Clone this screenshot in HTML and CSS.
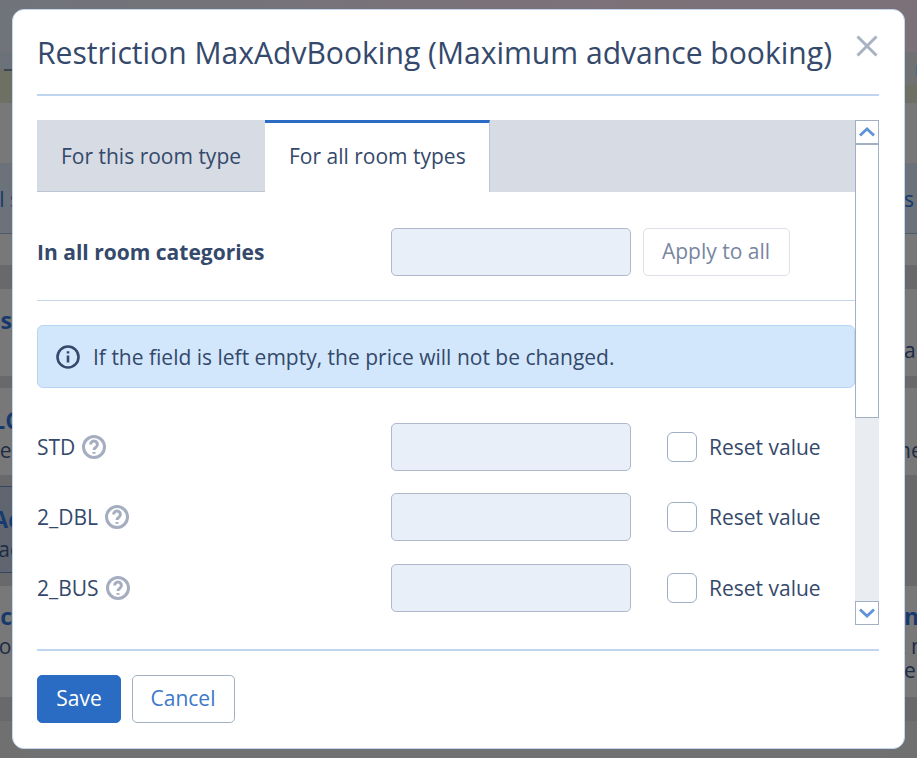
FILE: index.html
```html
<!DOCTYPE html>
<html lang="en">
<head>
<meta charset="utf-8">
<title>Restriction MaxAdvBooking</title>
<link rel="stylesheet" href="styles.css">
</head>
<body>
<div class="behind">
  <div class="strip left">
    <div class="seg h52"></div>
    <div class="seg h17 blue"></div>
    <div class="seg h34 green"><i class="specks"></i></div>
    <div class="seg h60"></div>
    <div class="seg h71 blue line"><span class="t t1 past">l s</span></div>
    <div class="seg h31"></div>
    <div class="seg h24 dark"></div>
    <div class="seg h87"><b class="t t2">es</b></div>
    <div class="seg h12 dark"></div>
    <div class="seg h87"><b class="t t3 past">LC</b><span class="t past">er</span></div>
    <div class="seg h11 dark"></div>
    <div class="seg h87 deep"><b class="t t3 past">Ac</b><span class="t past">ac</span></div>
    <div class="seg h13 dark"></div>
    <div class="seg h111"><b class="t t3 t3b">c</b><span class="t past">or</span></div>
    <div class="seg h24 dark"></div>
    <div class="seg fill"></div>
  </div>
  <div class="strip right">
    <div class="seg h85 pink"><i class="cal"></i><i class="mini"></i></div>
    <div class="seg h18 green"></div>
    <div class="seg h60"></div>
    <div class="seg h71 blue line"><span class="t t1 out">s</span></div>
    <div class="seg h31"></div>
    <div class="seg h24 dark"></div>
    <div class="seg h87"><span class="t t4 out">al</span></div>
    <div class="seg h12 dark"></div>
    <div class="seg h87"><span class="t t5 out wide">ne</span></div>
    <div class="seg h111b dark"></div>
    <div class="seg h111"><b class="t t3 t3b out">n</b><span class="t out wide tight">t n</span><span class="t out tight">e</span></div>
    <div class="seg h24 dark"></div>
    <div class="seg fill"></div>
  </div>
</div>
<main class="modal">
  <header class="modal-head">
    <h1>Restriction MaxAdvBooking (Maximum advance booking)</h1>
    <svg class="close" viewBox="0 0 22 22" width="22" height="22"><path d="M1.500 1.500 20.500 20.500M20.500 1.500 1.500 20.500"/></svg>
  </header>
  <div class="scroller">
    <div class="content">
      <div class="tabs">
        <div class="tab">For this room type</div>
        <div class="tab active">For all room types</div>
      </div>
      <div class="all-row">
        <strong class="label">In all room categories</strong>
        <div class="input"></div>
        <div class="apply">Apply to all</div>
      </div>
      <div class="info">
        <svg viewBox="0 0 24 24" width="24" height="24"><circle cx="12" cy="12" r="10.500"/><path d="M12 10.500v7M12 6.200v2.400"/></svg>
        <span>If the field is left empty, the price will not be changed.</span>
      </div>
      <div class="room">
        <div class="label name">STD <svg class="help" viewBox="0 0 24 24" width="24" height="24"><circle cx="12" cy="12" r="10.500"/><path d="M8.600 9.400a3.400 3.400 0 1 1 5.300 2.800c-1.200.8-1.900 1.400-1.900 2.800M12 17v1.800"/></svg></div>
        <div class="input"></div>
        <div class="check"></div><span>Reset value</span>
      </div>
      <div class="room">
        <div class="label name">2_DBL <svg class="help" viewBox="0 0 24 24" width="24" height="24"><circle cx="12" cy="12" r="10.500"/><path d="M8.600 9.400a3.400 3.400 0 1 1 5.300 2.800c-1.200.8-1.900 1.400-1.900 2.800M12 17v1.800"/></svg></div>
        <div class="input"></div>
        <div class="check"></div><span>Reset value</span>
      </div>
      <div class="room">
        <div class="label name">2_BUS <svg class="help" viewBox="0 0 24 24" width="24" height="24"><circle cx="12" cy="12" r="10.500"/><path d="M8.600 9.400a3.400 3.400 0 1 1 5.300 2.800c-1.200.8-1.900 1.400-1.900 2.800M12 17v1.800"/></svg></div>
        <div class="input"></div>
        <div class="check"></div><span>Reset value</span>
      </div>
    </div>
    <div class="scrollbar">
      <div class="arrow"><svg viewBox="0 0 16 10" width="16" height="10"><path d="M1 8.500 8 2l7 6.500"/></svg></div>
      <div class="thumb"></div>
      <div class="arrow down"><svg viewBox="0 0 16 10" width="16" height="10"><path d="M1 1.500 8 8l7-6.500"/></svg></div>
    </div>
  </div>
  <footer class="modal-foot">
    <div class="btn save">Save</div>
    <div class="btn cancel">Cancel</div>
  </footer>
</main>
</body>
</html>
```
FILE: styles.css
```css
* { box-sizing: border-box; }
html, body { margin: 0; height: 100%; }
body {
  width: 917px; height: 758px; overflow: hidden; position: relative;
  background: linear-gradient(90deg, #70747a 0%, #7d7178 70%, #7c7079 100%) top / 100% 52px no-repeat, #707173;
  font-family: "Open Sans", sans-serif; color: #34496b;
  padding: 9px 0 0 12px;
}
.behind { position: absolute; inset: 0; display: flex; justify-content: space-between; }
.strip { width: 30px; height: 758px; display: flex; flex-direction: column; font-size: 21px; line-height: 30px; color: #1d2c45; }
.seg { background: #787878; flex: none; overflow: hidden; position: relative; display: flex; flex-direction: column; }
.left .seg { align-items: flex-end; padding-right: 18px; }
.right .seg { padding-left: 18px; align-items: flex-start; }
.strip .h52 { background: none; height: 52px; }
.h17 { height: 17px; } .h34 { height: 34px; } .h60 { height: 60px; } .h71 { height: 71px; }
.h31 { height: 31px; } .h24 { height: 24px; } .h87 { height: 87px; } .h12 { height: 12px; }
.h11 { height: 11px; } .h13 { height: 13px; } .h111 { height: 111px; } .h85 { height: 85px; }
.h18 { height: 18px; } .h111b { height: 111px; }
.fill { flex: 1; background: #707070 !important; }
.seg.blue { background: #6c7279; }
.seg.green { background: #6d7063; }
.seg.dark { background: #69696b; }
.seg.deep { background: #5f6670; border-top: 1px solid #33455f; border-bottom: 1px solid #33455f; }
.seg.line { border-bottom: 1px solid #4f5a68; }
.seg.pink { background: none; }
.t { display: block; white-space: nowrap; flex: none; }
b.t { font-weight: 700; color: #173a6e; font-size: 23px; }
.past { margin-right: -8px; }
.t1 { margin-top: 21px; color: #173a6e; }
.t2 { margin-top: 16px; }
.t3 { margin-top: 17px; }
.t3b { margin-top: 15px; }
.t4 { margin-top: 46px; }
.t5 { margin-top: 47px; }
.right .seg .out { margin-left: -1px; }
.right .seg .wide { margin-left: -7px; }
.right .seg .tight { line-height: 24px; }
.right .seg .tight.wide { margin-top: 3px; }
.cal { display: block; width: 24px; height: 32px; margin: 13px 0 0 3px; border: 3px solid #1d2a3d; border-radius: 6px; }
.mini { display: block; width: 14px; height: 11px; margin: 20px 0 0 1px; border: 2px solid #41699e; border-right: 0; }
.pink.seg { padding-left: 28px; }
.specks { display: block; width: 8px; height: 2px; margin-top: 0; background: #3f4550; }
.modal {
  position: relative; width: 893px; height: 740px; background: #fff;
  border: 1px solid #c2d6ef; border-radius: 12px;
  padding: 0 25px 0 24px; display: flex; flex-direction: column;
}
.modal-head {
  height: 86px; border-bottom: 2px solid #c0d5f0; display: flex;
  justify-content: space-between; flex: none; padding-top: 23px; margin-bottom: 24px; width: 842px;
}
h1 { margin: 0; font-size: 30.080px; line-height: 40px; font-weight: 400; color: #34496b; white-space: nowrap; }
.close { margin: 2px 1px 0 0; fill: none; stroke: #a8b2c3; stroke-width: 3; }
.scroller { display: flex; height: 505px; width: 842px; flex: none; }
.content { width: 818px; flex: none; }
.tabs { display: flex; background: #d7dbe3; height: 72px; }
.tab { width: 229px; height: 72px; padding: 21px 0 0 24px; font-size: 21px; line-height: 30px; border-bottom: 1px solid #bcc5d3; border-right: 1px solid #bcc5d3; }
.tab.active { width: 225px; margin-left: -1px; background: #fff; border-top: 3px solid #2a6cc4; border-bottom: 0; padding: 18px 0 0 24px; }
.all-row { display: flex; align-items: center; height: 109px; padding-top: 11px; border-bottom: 1px solid #c4d6ea; }
.label { width: 354px; flex: none; font-size: 21px; }
strong.label { font-weight: 700; }
.input { width: 240px; height: 48px; background: #e8eff9; border: 1px solid #afb9cb; border-radius: 5px; flex: none; }
.apply { margin-left: 12px; width: 147px; height: 48px; border: 1px solid #dde1e8; border-radius: 5px; padding-right: 1px; text-align: center; font-size: 21px; line-height: 44px; color: #78869f; }
.info { margin-top: 24px; height: 63px; display: flex; align-items: center; padding-left: 18px; gap: 13px; background: #d3e7fc; border: 1px solid #b5d5f4; border-radius: 6px; font-size: 21px; }
.info svg { fill: none; stroke: #34496b; stroke-width: 2.600; flex: none; }
.room { display: flex; align-items: center; height: 48px; font-size: 21px; margin-top: 22.400px; }
.info + .room { margin-top: 35px; }
.name { display: flex; align-items: center; gap: 7px; }
.help { fill: none; stroke: #a4aec0; stroke-width: 3; }
.check { width: 30px; height: 30px; margin: 0 12px 0 36px; border: 1px solid #9faec4; border-radius: 6px; }
.scrollbar { width: 24px; height: 505px; background: #e9edf1; display: flex; flex-direction: column; flex: none; }
.arrow { width: 24px; height: 24px; background: #fff; border: 1px solid #a3b0c3; display: flex; align-items: center; justify-content: center; flex: none; }
.arrow svg { fill: none; stroke: #5e93da; stroke-width: 2.800; }
.thumb { height: 274px; background: #fff; border: 1px solid #a3b0c3; flex: none; }
.arrow.down { margin-top: auto; }
.modal-foot { margin-top: 24px; width: 842px; border-top: 2px solid #c0d5f0; padding-top: 24px; display: flex; gap: 11px; }
.btn { height: 48px; border-radius: 5px; font-size: 21px; line-height: 44px; text-align: center; }
.save { width: 84px; background: #2a6cc4; border: 1px solid #2a6cc4; color: #fff; }
.cancel { width: 103px; border: 1px solid #a3b0c3; padding-right: 1px; color: #3a78c9; }
```
